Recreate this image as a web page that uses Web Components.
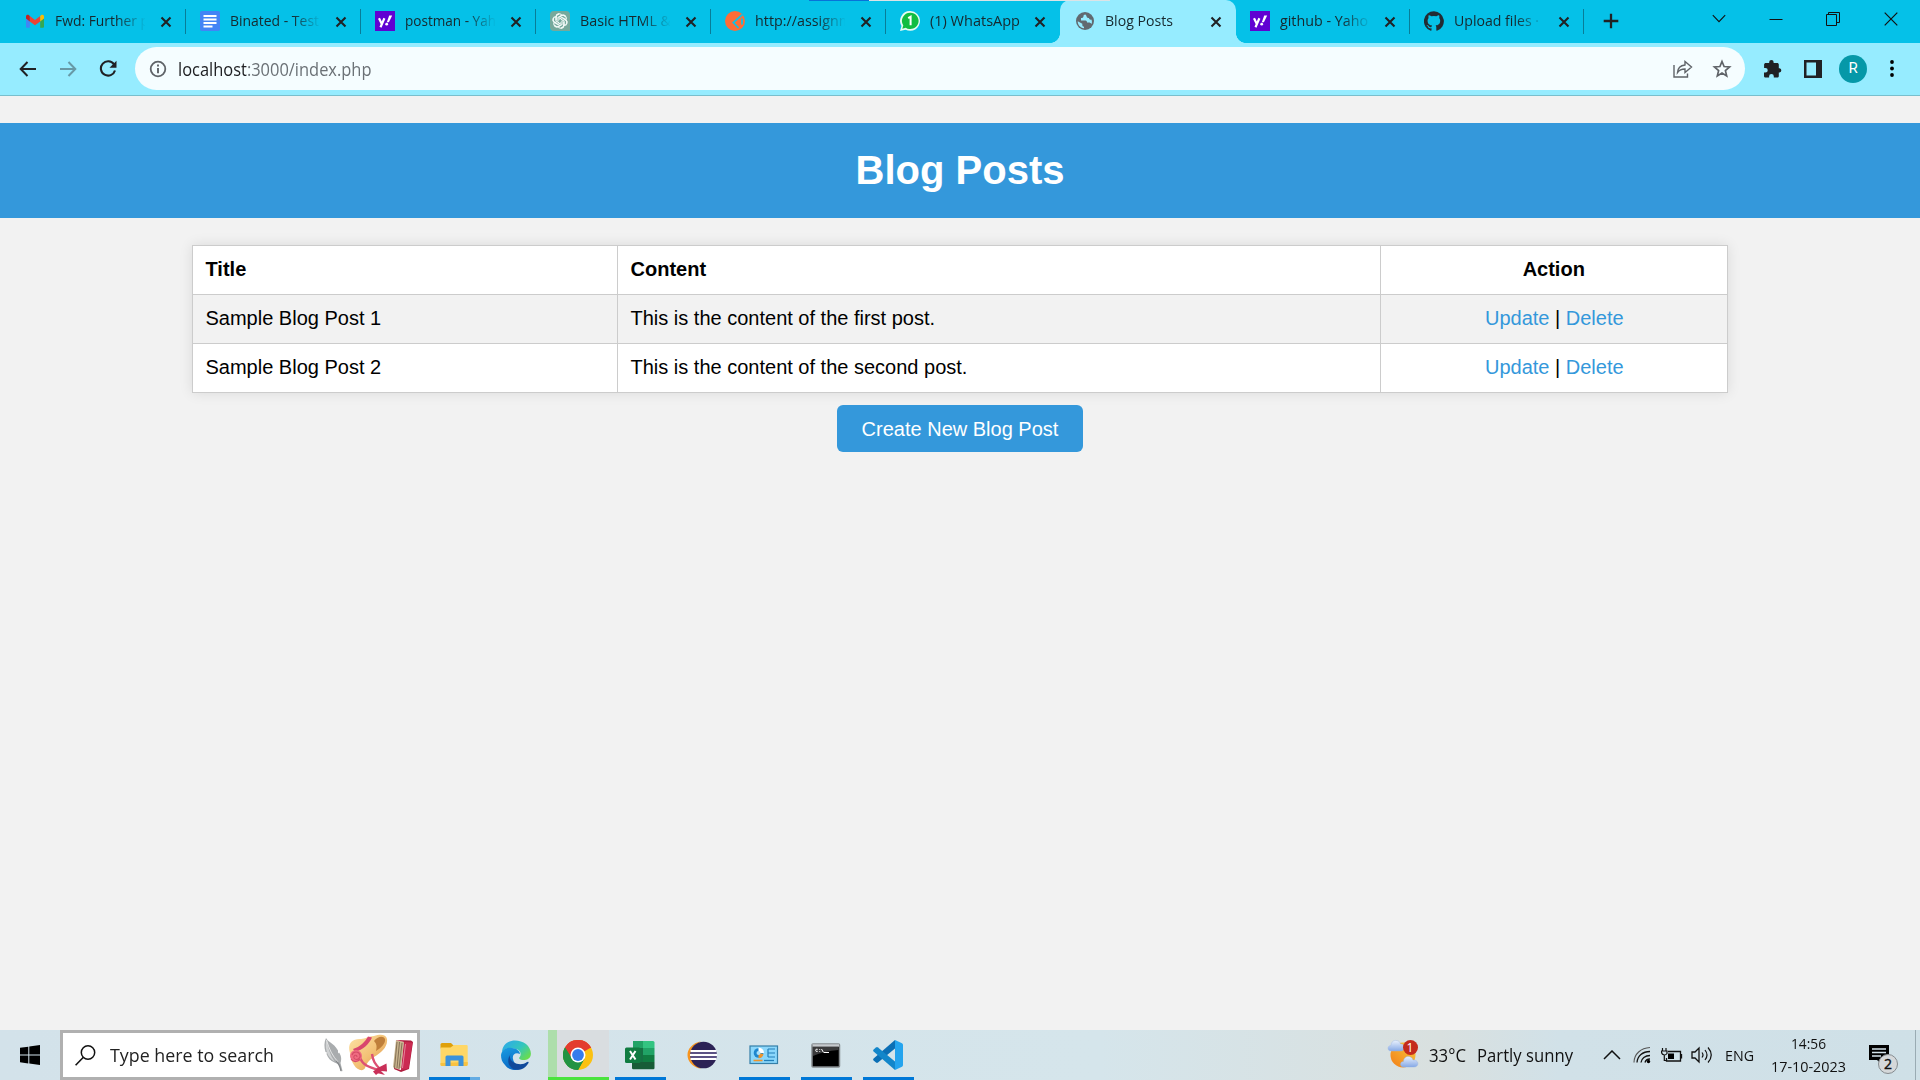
<!DOCTYPE html>
<html lang="en">
<head>
<meta charset="utf-8">
<title>Blog Posts</title>
<style>
html,body{margin:0;height:100%}
body{background:#f2f2f2;font-family:"Liberation Sans",Arial,sans-serif;font-size:20px;overflow:hidden}
</style>
</head>
<body>
<desktop-screen></desktop-screen>
<script>
const UI = '"Open Sans","Noto Sans",sans-serif';

const yahoo = `<rect width="20" height="20" fill="#6001d2"/><path d="M4 7.2l2.7 5.6M9.4 7.2L5.5 16.3" stroke="#fff" stroke-width="2.2" fill="none"/><path d="M11.8 11.2L14.2 4.4h3l-3.3 6.8z" fill="#fff"/><circle cx="11.7" cy="13.2" r="1.4" fill="#fff"/>`;

const ICONS = {
gmail: [20,20,`<path d="M1 4.6v11.2q0 1 1 1h2.8V8.2z" fill="#4285f4"/><path d="M19 4.6v11.2q0 1-1 1h-2.8V8.2z" fill="#34a853"/><path d="M4.8 5v5.4L10 14.3l5.2-3.9V5L10 8.9z" fill="#ea4335"/><path d="M1 5.3v2.3l3.8 2.9V5L4 4.3C2.800 3.300 1 4 1 5.300z" fill="#c5221f"/><path d="M19 5.300v2.300l-3.800 2.900V5l.8-.7c1.200-1 3-.3 3 1z" fill="#fbbc04"/>`],
docs: [20,20,`<rect width="20" height="20" rx="1.8" fill="#4384f5"/><path d="M3.500 5h13M3.500 8.500h13M3.500 12h13M3.500 15.500h9" stroke="#fff" stroke-width="2"/>`],
yahoo: [20,20,yahoo],
gpt: [20,20,`<path d="M4 0h12a4 4 0 0 1 4 4v16H4a4 4 0 0 1-4-4V4a4 4 0 0 1 4-4z" fill="#75a99c"/><g fill="none" stroke="#f3faf8" stroke-width="1.150">${[0,60,120,180,240,300].map(a=>`<path transform="rotate(${a} 10 10)" d="M6.200 9V5.600a3 3 0 0 1 5.600-1.300M8 10V6.500l3.300-1.900a3 3 0 0 1 4.200 1.300"/>`).join('')}</g>`],
postman: [20,20,`<circle cx="10" cy="10" r="10" fill="#ff6c37"/><path d="M17.500 3.500L8.300 11.500 13.500 17M17 7.500v6" fill="none" stroke="#13c1e4" stroke-width="1.800"/>`],
whatsapp: [20,20,`<path d="M10.200 0A9.700 9.700 0 0 1 20 9.900a9.900 9.900 0 0 1-14.500 8.800L0 20l1.500-5A9.900 9.900 0 0 1 10.200 0z" fill="#e5fbf2"/><path d="M10.300 1.700a8.200 8.200 0 1 1-4.500 15l-3.500 1 1-3.300a8.200 8.200 0 0 1 7-12.700z" fill="#12bd42"/><path d="M8.200 7.200l2.400-1.500v8.500" fill="none" stroke="#fff" stroke-width="2"/>`],
globe: [20,20,`<circle cx="10" cy="10" r="9" fill="#616970"/><path d="M10.500 3.500c-1.500 0-2 .8-2 1.700 0 1.300-1.200 1.800-2.500 1.800v2.500h4.500c1.200 0 1.500 1 1.500 2h2c.9 0 1.800.5 2.500 1.500.7-1.500.5-3 0-4.500-1 .5-2.500 0-2.500-1.500-1.500 0-2.500-.5-2.500-2zM2.700 10.300c0 3.700 2.500 6.500 6.300 6.900v-1.400c-1.200 0-1.700-.7-1.700-2v-1z" fill="#96ecff"/>`],
github: [20,20,`<path d="M10 .2a10 10 0 0 0-3.200 19.500c.5.1.700-.2.700-.5v-1.900c-2.800.6-3.400-1.200-3.400-1.200-.4-1.100-1.100-1.500-1.100-1.500-.9-.6.1-.6.1-.6 1 .1 1.500 1 1.500 1 .9 1.600 2.400 1.100 2.900.9.100-.6.400-1.100.6-1.300-2.200-.3-4.500-1.100-4.500-5 0-1.100.4-2 1-2.700-.1-.2-.4-1.300.1-2.600 0 0 .8-.3 2.700 1a9.500 9.500 0 0 1 5 0c1.900-1.300 2.700-1 2.700-1 .5 1.300.2 2.400.1 2.600.6.700 1 1.600 1 2.700 0 3.900-2.300 4.700-4.600 5 .400.300.7.900.7 1.900v2.700c0 .3.200.6.700.5A10 10 0 0 0 10 .2z" fill="#232b33"/>`],
close: [12,12,`<path d="M1.500 1.500l9 9M10.500 1.500l-9 9" stroke="#202124" stroke-width="2.100"/>`],
plus: [16,16,`<path d="M8 .7v14.600M.7 8h14.600" stroke="#202124" stroke-width="2.300"/>`],
chevdown: [14,9,`<path d="M.8 1.200L7 7.600l6.200-6.400" fill="none" stroke="#111" stroke-width="1.100"/>`],
minimize: [14,14,`<path d="M.5 7.500h13" stroke="#111"/>`],
maximize: [14,14,`<path d="M.5 2.500h10v11H.5zM2.500 2.500v-2h11v10h-2.500" fill="none" stroke="#111"/>`],
wclose: [14,14,`<path d="M.7.7l12.600 12.600M13.300.7L.7 13.300" stroke="#111" stroke-width="1.200"/>`],
back: [18,16,`<path d="M17 8H2M8.500 1L1.700 8l6.800 7" fill="none" stroke="#202124" stroke-width="2"/>`],
forward: [18,16,`<path d="M1 8h15M9.500 1l6.800 7-6.800 7" fill="none" stroke="#6799a6" stroke-width="2"/>`],
reload: [18,18,`<path d="M15 4.300A7.200 7.200 0 1 0 16 10.500" fill="none" stroke="#202124" stroke-width="2.100"/><path d="M17.500.8v7h-7z" fill="#202124"/>`],
info: [18,18,`<circle cx="9" cy="9" r="7.300" fill="none" stroke="#5f6368" stroke-width="1.800"/><path d="M9 4.500v1.900M9 8v5.300" stroke="#5f6368" stroke-width="1.900"/>`],
share: [20,18,`<path d="M1 5v12h13.500v-3.500" fill="none" stroke="#5f6368" stroke-width="1.400"/><path d="M4.500 12.500c.3-4.500 3.500-7 7.500-7.500V1.500L18.500 7 12 12.500V9c-3.500 0-5.800 1-7.500 3.500z" fill="none" stroke="#5f6368" stroke-width="1.400"/>`],
star: [20,20,`<path d="M10 2.500l2.100 5 5.500.5-4.200 3.600 1.300 5.400L10 14.100 5.300 17l1.300-5.400L2.400 8l5.500-.5z" fill="none" stroke="#5f6368" stroke-width="1.700"/>`],
puzzle: [20,20,`<path d="M16.600 9.200h-.8V5.600c0-1-.7-1.700-1.700-1.700h-3.500v-.8a2.200 2.200 0 0 0-4.400 0v.8H2.800c-.9 0-1.700.7-1.700 1.700v3.300h1.300a2.300 2.300 0 0 1 0 4.700H1v3.300c0 1 .8 1.700 1.700 1.700h3.400v-1.300a2.300 2.300 0 0 1 4.700 0v1.300h3.300c1 0 1.700-.7 1.700-1.700v-3.400h.8a2.200 2.200 0 0 0 0-4.300z" fill="#202124"/>`],
panel: [18,18,`<path d="M0 0h18v18H0zM2.500 2.500v13H12v-13z" fill="#202124" fill-rule="evenodd"/>`],
dots: [4,17,`<circle cx="2" cy="2" r="1.900"/><circle cx="2" cy="8.500" r="1.900"/><circle cx="2" cy="15" r="1.900"/>`],
start: [20,20,`<path d="M0 2.800L8.300 1.700v7.800H0zM9.300 1.500L20 0v9.500H9.300zM0 10.500h8.300v7.900L0 17.300zM9.300 10.500H20V20L9.300 18.500z"/>`],
search: [21,21,`<circle cx="13" cy="7.500" r="6.700" fill="none" stroke="#111" stroke-width="1.500"/><path d="M8.400 12.300L.6 20.200" stroke="#111" stroke-width="1.600"/>`],
feather: [20,36,`<path d="M2 1C0 5 0 10 1.500 15l1.500.5-.5 1.500c1.500 4 4 7 8 8.500 2.500 1 4.500 2 5.500 5l1.500 4 1-.5-2-8c1.500-4 .500-8-1.500-10.500l-1 1 0-3C11.500 9 9 7.500 6.500 5.500 4.500 4 3 3 2 1z" fill="#a9acae"/><path d="M2.500 3c-1.500 5-.5 10 1 14 1.500 3 4 6 7 7.500C6 18 4 11 2.500 3z" fill="#d0d2d3"/><path d="M2.500 3c2.500 9 6 16 11.500 22" stroke="#f2f2f2" stroke-width=".8" fill="none"/><path d="M12 24c2.500 2 4 5 5 10" stroke="#84878a" stroke-width="1.300" fill="none"/>`],
hat: [42,42,`<defs><linearGradient id="h" x2="1" y2="1"><stop stop-color="#fde3a6"/><stop offset=".55" stop-color="#f3c175"/><stop offset="1" stop-color="#d98e42"/></linearGradient></defs><path d="M2 19C-1 10 4 4 13 5 17 5 21 2 26 2 32 0 38 0 39 5c1 8-6 14-13 18-5 3-7 6-9 11-2 4-8 2-11-3C3 27 3 23 2 19z" fill="url(#h)"/><path d="M26 7c3-4 9-6 11-2 1 4-4 9-9 12 1-4 1-7-2-10z" fill="#bf7f3a"/><path d="M5 15C12 13 17 8 20 2.500l4 1C21 10 15 16 7 18z" fill="#d9466e"/><path d="M12 24c3 7 8 9 19 12M24 20c1 7 3 10 8 15" fill="none" stroke="#dc5074" stroke-width="2.400"/><path d="M30.500 33.500l8-4 .5 8-6-.5-5 4-3-3.500zM31 35l6 6-8-2z" fill="#c92f58"/><circle cx="8" cy="22" r="6" fill="#ef6c81"/><path d="M4 21c1-4 7-4 8 0s-4 6-6 3c-1-3 3-4 3-1M3 25c2 3 6 4 9 0" fill="none" stroke="#d54c66" stroke-width="1.100"/>`],
book: [22,33,`<path d="M4 1L1 28l3 3 5-2L12 3z" fill="#c9b58e"/><path d="M5 3L2.500 29M7.500 3L5 29M10 4L7 30" stroke="#725f49" stroke-width=".8"/><path d="M4 1l15 .6 2 1.400-4 27-8 3-7-3v-1l7 2 3-28z" fill="#b01e3f"/><path d="M12.500 3L20.500 3.500 16.500 29.500 9.500 31z" fill="#cb2b52"/><path d="M13.500 5l-3 24" stroke="#e8809a"/>`],
explorer: [30,30,`<path d="M1.500 4.500q0-1.500 1.500-1.500h9l2.500 2.500v3h-13z" fill="#dfa00b"/><path d="M1.500 7.500h10l3.500-2.500h12.500q1.200 0 1.200 1.200V24.500q0 1.500-1.500 1.500h-24.200q-1.500 0-1.500-1.500z" fill="#ffd766"/><path d="M1.500 23v2q0 1 1.500 1h24q1.700 0 1.700-1.500V22z" fill="#f8c241"/><path d="M6.500 26V17q0-1.500 1.500-1.500h15q1.500 0 1.500 1.500v9h-5v-5.500h-8V26z" fill="#3b92dc"/>`],
edge: [30,30,`<defs><linearGradient id="e1" x2="1" y2=".7"><stop offset=".15" stop-color="#2eaee3"/><stop offset=".6" stop-color="#34c6bd"/><stop offset="1" stop-color="#68dc50"/></linearGradient><linearGradient id="e2" x2=".4" y2="1"><stop stop-color="#1b9de2"/><stop offset="1" stop-color="#0867c4"/></linearGradient></defs><path d="M1 12C2-1 17-2 25 4c5 4 7 12 2 15-3 2-9 1-9-1 3-3 2-8-3-9-6-2-11-1-14 3z" fill="url(#e1)"/><path d="M0 15C1 9 6 7 11 8c4 0 8 3 8 6-5-2-8 1-7 5 1 6 7 8 12 7-7 6-16 5-20-1-3-3-4-6-4-10z" fill="url(#e2)"/><path d="M11 13c-3 2-3 6 1 9 5 3 10 3 14 0q2-1 1.500 1C23 31 13 32 9 26c-3-4-2-10 2-13z" fill="#114a9b"/>`],
chrome: [30,30,`<circle cx="15" cy="15" r="15" fill="#fbc111"/><path d="M15 15L2 7.500a15 15 0 0 1 26 0z" fill="#e33b2e"/><path d="M2 7.500A15 15 0 0 0 15 30l6.500-11.200L15 15z" fill="#229342"/><path d="M15 8h13.200a15 15 0 0 0-26.200-.5L9 18.500z" fill="#e33b2e"/><path d="M2 7.500L9 19l6 3 5-1-5 9A15 15 0 0 1 2 7.500z" fill="#229342"/><circle cx="15" cy="15" r="7.500" fill="#fff"/><circle cx="15" cy="15" r="5.900" fill="#357cec"/>`],
excel: [30,30,`<path d="M8 1h12v7H8z" fill="#21a366"/><path d="M18 1h10q1.500 0 1.500 1.500V8H18z" fill="#33c481"/><path d="M7 8h11v14H7z" fill="#167044"/><path d="M18 8h11.500v7H18z" fill="#21a366"/><path d="M18 15h11.500v7H18z" fill="#107c41"/><path d="M7 22h22.500v6q0 1.200-1.200 1.200H8.200Q7 29.200 7 28z" fill="#185c37"/><rect x="0" y="7.500" width="15.500" height="15.500" rx="1.500" fill="#107c41"/><path d="M5 11l5.500 8.500M10.500 11L5 19.500" stroke="#fff" stroke-width="2"/>`],
eclipse: [30,30,`<path d="M14 1.200C-4 5-4 25 14 28.800 4 23 4 7 14 1.200z" fill="#f7941e"/><circle cx="16.500" cy="15" r="13.300" fill="#2c2255"/><path d="M3.500 11h26M3 15h27M3.500 19h26" stroke="#fff" stroke-width="2"/><path d="M3.500 13h26M3.500 17h26" stroke="#8b82b5" stroke-width="1"/>`],
control: [30,20,`<rect x="1" y="1" width="27.500" height="17.500" fill="#8bd7fb" stroke="#347fa8" stroke-width="1.200"/><circle cx="9.500" cy="8" r="4.800" fill="#1d87cf"/><path d="M9.500 8V2.500A5.500 5.500 0 0 1 15 8z" fill="#fff"/><path d="M9.500 8v5.300A5.300 5.300 0 0 0 14.500 9z" fill="#ef942b"/><circle cx="9.500" cy="8" r="2" fill="#a8e0fa"/><path d="M19 4v8M19 4h7M19 8h7M19 12h7" stroke="#227fba" stroke-width="1.200"/><path d="M4.500 15.500h9" stroke="#ef942b" stroke-width="1.600"/><path d="M15 15.500h10" stroke="#227fba" stroke-width="1.300"/>`],
cmd: [30,25,`<rect x="1" y="1" width="27.500" height="23" rx="1" fill="#000" stroke="#858b8e" stroke-width="1.500"/><path d="M1.500 1.200h26.500v2.500H1.500z" fill="#c7cbce"/><path d="M2 4h25.500v3Q13 8 2 13z" fill="#3a3a3b"/><path d="M6.700 6.300q-2-.7-2 1t2 1M8.700 6.200v.8M8.700 8v.8M10.500 6l2 3.500M13 9.500h5" fill="none" stroke="#fff" stroke-width="1"/>`],
vscode: [30,30,`<path d="M22 0l7 3.200q1 .5 1 1.800v20q0 1.300-1 1.800L22 30z" fill="#24a4ee"/><path d="M22 0v8.500L5 22.500q-1 .8-2 0L.6 20.400q-1-1 0-2z" fill="#0b6fb5"/><path d="M22 30v-8.500L5 7.500q-1-.8-2 0L.6 9.600q-1 1 0 2z" fill="#1286ca"/>`],
weather: [32,32,`<defs><linearGradient id="s" x1="1" x2="0" y2="1"><stop stop-color="#f9cc3f"/><stop offset="1" stop-color="#f27d17"/></linearGradient><linearGradient id="c" x2="0" y2="1"><stop stop-color="#e9f1fd"/><stop offset="1" stop-color="#86a9e6"/></linearGradient></defs><circle cx="16" cy="16" r="12.500" fill="url(#s)"/><path d="M4 12C0 12 0 6.500 4 6.500 4 0 12.500 0 13.500 5c5-.5 5.500 7 0 7z" fill="url(#c)" stroke="#9ab6e6" stroke-width=".4"/><path d="M16.500 28c-4 0-4-5.500 0-5.500 0-6.500 8.500-6.500 9.500-1.500 6-.5 6.500 7 1 7z" fill="url(#c)" stroke="#8fafe5" stroke-width=".4"/>`],
up: [18,10,`<path d="M1 9l8-8 8 8" fill="none" stroke="#111" stroke-width="1.500"/>`],
wifi: [18,18,`<g fill="none" stroke="#111"><path d="M1 16.500C1 8 8 2 17 1.500" stroke="#555" stroke-width="1.100"/><path d="M4 16.500C4.500 10 9.500 5.500 17 5.500M8 16.500c.500-4 4-7 9-7M12 16.500c.500-2 2-3.500 5-3.500" stroke-width="1.300"/></g><circle cx="15.500" cy="15.500" r="1.700"/>`],
battery: [22,16,`<path d="M7 4.500h12.500v9.500H5.500v-3M20.500 7v4.500" fill="none" stroke="#111" stroke-width="1.300"/><path d="M7 6.500h6v5.500H7z"/><path d="M1.500 1v2.500M5 1v2.500M.5 4h5.500v2.500Q5 8 3.300 8 .5 7.500.5 5zM3.300 8v5.500H6" fill="none" stroke="#111" stroke-width="1.200"/>`],
speaker: [22,18,`<path d="M1 6h3l4-4v14l-4-4H1z" fill="none" stroke="#111" stroke-width="1.300"/><path d="M11 6.500q2 2.500 0 5M14 4q4 5 0 10M17 1.500q6.500 7.500 0 15" fill="none" stroke="#111" stroke-width="1.200"/>`],
notice: [20,20,`<path d="M0 0h20v15h-6.500v5L8 15H0z"/><path d="M3 4h14M3 7.500h14M3 11h9" stroke="#d3e2ea" stroke-width="1.300"/>`]
};

class BaseElement extends HTMLElement {
  constructor() { super(); this.attachShadow({mode:'open'}); }
  connectedCallback() { this.shadowRoot.innerHTML = `<style>*{box-sizing:border-box}</style>` + this.view(); this.ready && this.ready(); }
}

/* Vector icon drawn at its natural size */
class UiIcon extends BaseElement {
  view() {
    const [w,h,body] = ICONS[this.getAttribute('name')];
    return `<style>:host{display:block;flex:none;width:${w}px;height:${h}px}svg{display:block}</style><svg width="${w}" height="${h}" viewBox="0 0 ${w} ${h}">${body}</svg>`;
  }
}

class FitText extends BaseElement {
  view() { return `<style>:host{display:block;flex:none;white-space:pre;width:${this.getAttribute('w')}px}span{display:inline-block;transform-origin:0 50%}</style><span><slot></slot></span>`; }
  ready() {
    const s = this.shadowRoot.querySelector('span');
    s.style.transform = `scaleX(${this.getAttribute('w') / s.getBoundingClientRect().width})`;
  }
}

class BrowserTab extends BaseElement {
  view() {
    const w = this.getAttribute('w'), on = this.hasAttribute('active'), last = this.hasAttribute('plain');
    return `<style>
:host{display:flex;flex:none;align-items:center;position:relative;width:${w}px;height:43px;padding:0 0 1px ${on?15:14}px;font:15px/20px ${UI};color:#17282e;${on?'background:#96ecff;border-radius:10px 10px 0 0;':''}}
.t{width:90px;margin-left:10px;overflow:hidden;padding-bottom:3px;${this.hasAttribute('fade')?'-webkit-mask:linear-gradient(90deg,#000 62px,transparent 91px)':''}}
.x{margin:1px 14px 0 auto}
${on?`:host::before,:host::after{content:"";position:absolute;bottom:0;width:10px;height:10px}
:host::before{left:-10px;background:radial-gradient(circle at 0 0,transparent 9.600px,#96ecff 10.200px)}
:host::after{right:-10px;background:radial-gradient(circle at 100% 0,transparent 9.600px,#96ecff 10.200px)}`:
last?'':`:host::after{content:"";position:absolute;right:0;top:9px;width:1px;height:25px;background:#087d98}`}
</style><ui-icon name="${this.getAttribute('icon')}"></ui-icon><div class="t"><fit-text w="${this.getAttribute('tw')}"><slot></slot></fit-text></div><ui-icon class="x" name="close"></ui-icon>`;
  }
}

class TabStrip extends BaseElement {
  view() { return `<style>
:host{display:flex;position:relative;height:43px;background:#05c1e8;padding-left:11px}
.new{margin:13px 0 0 18.500px}
.win{display:flex;align-items:center;height:37px;margin-left:auto;padding-right:22px;gap:44px}
.win :first-child{margin-right:-1px}.win :nth-child(2){margin-right:-1px}
.edge{position:absolute;left:809px;top:0;width:301px;height:1px;background:linear-gradient(90deg,#0872d8 60px,#dce3e6 60px)}
</style>
<browser-tab w="175" icon="gmail" tw="94" fade>Fwd: Further p</browser-tab>
<browser-tab w="175" icon="docs" tw="89" fade>Binated - Test</browser-tab>
<browser-tab w="175" icon="yahoo" tw="91" fade>postman - Yah</browser-tab>
<browser-tab w="175" icon="gpt" tw="91" fade>Basic HTML &amp;</browser-tab>
<browser-tab w="175" icon="postman" tw="97" fade>http://assignm</browser-tab>
<browser-tab w="174" icon="whatsapp" tw="90" plain>(1) WhatsApp</browser-tab>
<browser-tab w="176" icon="globe" tw="68" active>Blog Posts</browser-tab>
<browser-tab w="173.500" icon="yahoo" tw="88" fade>github - Yaho</browser-tab>
<browser-tab w="174.500" icon="github" tw="85" fade>Upload files ·</browser-tab>
<ui-icon class="new" name="plus"></ui-icon>
<div class="win"><ui-icon name="chevdown"></ui-icon><ui-icon name="minimize"></ui-icon><ui-icon name="maximize"></ui-icon><ui-icon name="wclose"></ui-icon></div>
<div class="edge"></div>`; }
}

class BrowserToolbar extends BaseElement {
  view() { return `<style>
:host{display:flex;align-items:center;height:53px;padding:0 25px 1px 18.500px;background:#96ecff;border-bottom:1px solid #79bfcd;font:17.500px/24px ${UI}}
.nav{display:flex;flex:none;align-items:center;gap:22px;width:116.500px}
.box{display:flex;flex:none;align-items:center;width:1610px;height:43px;border-radius:22px;background:#f5fdff;padding:0 13px 0 14px}
.url{margin-left:11px;color:#202124}
.box .share{margin-left:auto;margin-right:19px}
.av{width:28px;height:28px;border-radius:50%;background:#0598a8;color:#fff;display:grid;place-items:center;font:15px/1 Roboto,sans-serif;margin:0 23px 0 17px}
.right{display:flex;flex:none;align-items:center;margin-left:18px}
</style>
<div class="nav"><ui-icon name="back"></ui-icon><ui-icon name="forward"></ui-icon><ui-icon name="reload"></ui-icon></div>
<div class="box"><ui-icon name="info"></ui-icon><fit-text class="url" w="193.500">localhost<span style="color:#6b7176">:3000/index.php</span></fit-text><ui-icon class="share" name="share"></ui-icon><ui-icon name="star"></ui-icon></div>
<div class="right"><ui-icon name="puzzle"></ui-icon><ui-icon name="panel" style="margin-left:21px"></ui-icon><div class="av">R</div><ui-icon name="dots"></ui-icon></div>`; }
}

class PostRow extends BaseElement {
  view() {
    const head = this.hasAttribute('head');
    return `<style>
:host{display:flex;height:49px;line-height:23px;border-bottom:1px solid #ccc;background:${this.hasAttribute('shade')?'#f2f2f2':'#fff'};font-weight:${head?'bold':'normal'}}
div{padding:12px 13px 0 12.500px;border-right:1px solid #ccc}
.a{width:425px}.b{width:763px}.c{flex:1;padding-right:${head?13:12}px;text-align:center;border:0}
a{color:#3498db;text-decoration:none}
</style><div class="a"><slot name="title"></slot></div><div class="b"><slot name="content"></slot></div><div class="c">${head?'Action':'<a href="#">Update</a> | <a href="#">Delete</a>'}</div>`;
  }
}

class BlogPage extends BaseElement {
  view() { return `<style>
:host{display:flex;flex-direction:column;align-items:center;flex:1;background:#f2f2f2;color:#000}
h1{width:100%;height:95px;margin:27px 0;padding-top:25px;font-size:40px;line-height:45px;text-align:center;background:#3498db;color:#fff}
.table{width:1536px;border:1px solid #ccc;border-bottom:0;box-shadow:0 0 12.500px rgba(0,0,0,.1)}
.btn{width:246px;height:47px;margin-top:12px;padding-top:13px;line-height:23px;border-radius:6px;background:#3498db;color:#fff;text-align:center;text-decoration:none}
</style><h1>Blog Posts</h1>
<div class="table">
<post-row head><span slot="title">Title</span><span slot="content">Content</span></post-row>
<post-row shade><span slot="title">Sample Blog Post 1</span><span slot="content">This is the content of the first post.</span></post-row>
<post-row><span slot="title">Sample Blog Post 2</span><span slot="content">This is the content of the second post.</span></post-row>
</div><a class="btn" href="#">Create New Blog Post</a>`; }
}

class TaskButton extends BaseElement {
  view() {
    const live = this.hasAttribute('live'), open = this.hasAttribute('open'), many = this.hasAttribute('many');
    return `<style>
:host{display:flex;flex-direction:column;align-items:center;width:62px;height:50px}
.i{display:grid;place-items:center;width:61px;height:47px;padding-top:3px;${live?'background:linear-gradient(90deg,#addeab 9px,#d9dde0 9px)':''}}
.l{width:${live?61:51}px;height:3px;background:${live?'#4be33d':many?'linear-gradient(90deg,#0078d7 41px,#64ace3 41px)':open?'#0078d7':'transparent'}}
</style><div class="i"><ui-icon name="${this.getAttribute('icon')}"></ui-icon></div><div class="l"></div>`;
  }
}

class TaskBar extends BaseElement {
  view() { return `<style>
:host{display:flex;height:50px;background:linear-gradient(90deg,#d3e2ea 0,#d5e5eb 1100px,#d9e0df 1440px,#d1e1e8 1560px,#cfe0e7);font:17.500px/24px ${UI};color:#111}
.start{width:60px;display:grid;place-items:center}
.s{display:flex;align-items:center;width:360px;border:3px solid #b0b0b0;background:#fff;padding:0 4px 0 12px;font-size:18.750px}
.s fit-text{margin:0 50px 1px 13.500px;color:#222}
.s .hat{margin:0 2px 0 4px}
.apps{display:flex;margin-left:3px}
.tray{display:flex;align-items:center;margin-left:auto}
.w{position:relative;margin-right:10px}
.n{position:absolute;left:15.500px;top:.5px;width:15px;height:15px;border-radius:50%;background:#c42b1c;color:#fff;font-size:12px;line-height:15px;text-align:center}
.clock{display:flex;flex-direction:column;align-items:center;width:75px;font-size:15px;line-height:23px;margin:0 23px 0 17px}
.note{position:relative}
.b{position:absolute;left:9px;top:9px;width:20px;height:20px;border:1px solid #858b8f;border-radius:50%;background:#d5d8da;font-size:14px;line-height:18px;text-align:center;-webkit-text-stroke:.4px #111}
.end{width:5px;height:50px;border-left:1px solid #9aabb3;margin-left:26px}
</style>
<div class="start"><ui-icon name="start"></ui-icon></div>
<div class="s"><ui-icon name="search"></ui-icon><fit-text w="164">Type here to search</fit-text><ui-icon name="feather"></ui-icon><ui-icon class="hat" name="hat"></ui-icon><ui-icon name="book"></ui-icon></div>
<div class="apps"><task-button icon="explorer" open many></task-button><task-button icon="edge"></task-button><task-button icon="chrome" live></task-button><task-button icon="excel" open></task-button><task-button icon="eclipse"></task-button><task-button icon="control" open></task-button><task-button icon="cmd" open></task-button><task-button icon="vscode" open></task-button></div>
<div class="tray">
<div class="w"><ui-icon name="weather"></ui-icon><div class="n">1</div></div>
<fit-text w="37">33°C</fit-text><fit-text w="96" style="margin-left:11px">Partly sunny</fit-text>
<ui-icon name="up" style="margin-left:30px"></ui-icon><ui-icon name="wifi" style="margin-left:12px"></ui-icon><ui-icon name="battery" style="margin-left:10px"></ui-icon><ui-icon name="speaker" style="margin-left:8px"></ui-icon>
<fit-text w="29" style="margin-left:12px;font-size:15px">ENG</fit-text>
<div class="clock"><fit-text w="35">14:56</fit-text><fit-text w="75">17-10-2023</fit-text></div>
<div class="note"><ui-icon name="notice"></ui-icon><div class="b">2</div></div>
<div class="end"></div>
</div>`; }
}

class DesktopScreen extends BaseElement {
  view() { return `<style>:host{display:flex;flex-direction:column;width:1920px;height:1080px}</style><tab-strip></tab-strip><browser-toolbar></browser-toolbar><blog-page></blog-page><task-bar></task-bar>`; }
}

customElements.define('ui-icon', UiIcon);
customElements.define('fit-text', FitText);
customElements.define('browser-tab', BrowserTab);
customElements.define('tab-strip', TabStrip);
customElements.define('browser-toolbar', BrowserToolbar);
customElements.define('post-row', PostRow);
customElements.define('blog-page', BlogPage);
customElements.define('task-button', TaskButton);
customElements.define('task-bar', TaskBar);
customElements.define('desktop-screen', DesktopScreen);
</script>
</body>
</html>
